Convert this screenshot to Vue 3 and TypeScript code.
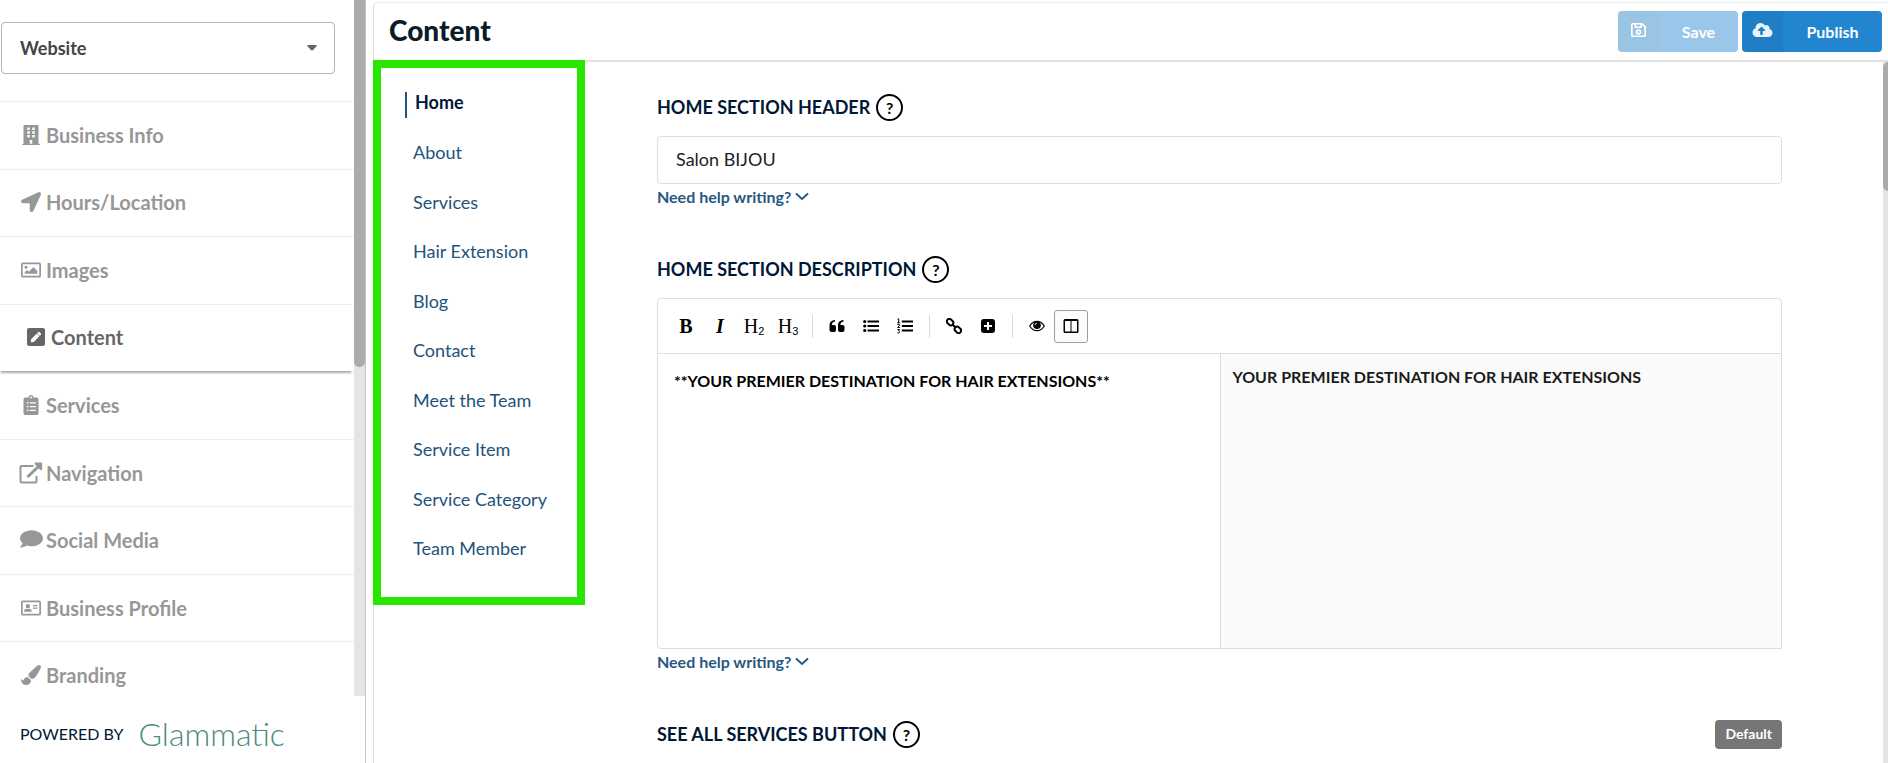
<script setup lang="ts">
import { ref } from 'vue'

interface MenuItem {
  label: string
  icon: string
}

const menu: MenuItem[] = [
  { label: 'Business Info', icon: 'building' },
  { label: 'Hours/Location', icon: 'arrow' },
  { label: 'Images', icon: 'image' },
  { label: 'Content', icon: 'pen' },
  { label: 'Services', icon: 'clipboard' },
  { label: 'Navigation', icon: 'external' },
  { label: 'Social Media', icon: 'comment' },
  { label: 'Business Profile', icon: 'card' },
  { label: 'Branding', icon: 'brush' },
]

const sections: string[] = [
  'Home',
  'About',
  'Services',
  'Hair Extension',
  'Blog',
  'Contact',
  'Meet the Team',
  'Service Item',
  'Service Category',
  'Team Member',
]

const area = ref('Website')
const activeMenu = ref('Content')
const activeSection = ref('Home')
const header = ref('Salon BIJOU')
const description = ref('**YOUR PREMIER DESTINATION FOR HAIR EXTENSIONS**')
</script>

<template>
  <div class="app">
    <aside class="sidebar">
      <div class="side-scroll">
        <div class="side-body">
          <div class="picker">
            <select v-model="area" aria-label="Area">
              <option>Website</option>
            </select>
            <svg class="caret" viewBox="0 0 10 6" aria-hidden="true"><path d="M1 0h8q1 .3.5 1.2L6 5q-1 1-2 0L.5 1.200Q0 .3 1 0z" /></svg>
          </div>
          <nav class="menu" aria-label="Main">
            <a
              v-for="item in menu"
              :key="item.label"
              href="#"
              class="menu-item"
              :class="{ active: item.label === activeMenu }"
              @click.prevent="activeMenu = item.label"
            >
              <span class="menu-icon">
                <svg v-if="item.icon === 'building'" class="i-building" viewBox="0 0 448 512"><path fill-rule="evenodd" d="M436 480h-20V24c0-13.300-10.700-24-24-24H56C42.700 0 32 10.700 32 24v456H12c-6.600 0-12 5.400-12 12v20h448v-20c0-6.600-5.400-12-12-12zM128 64h64v64h-64zM256 64h64v64h-64zM128 160h64v64h-64zM256 160h64v64h-64zM128 256h64v64h-64zM256 256h64v64h-64zM192 384h64v96h-64z" /></svg>
                <svg v-else-if="item.icon === 'arrow'" class="i-20" viewBox="0 0 512 512"><path d="M444.520 3.520L28.740 195.420c-47.970 22.390-31.980 92.750 19.190 92.750h175.910v175.910c0 51.170 70.360 67.170 92.750 19.190l191.900-415.780c15.990-38.390-25.590-79.970-63.970-63.970z" /></svg>
                <svg v-else-if="item.icon === 'image'" class="i-20" viewBox="0 0 512 512"><path fill-rule="evenodd" d="M48 64h416q48 0 48 48v288q0 48-48 48H48q-48 0-48-48V112q0-48 48-48zM54 106q-10 0-10 10v280q0 10 10 10h404q10 0 10-10V116q0-10-10-10zM128 144a40 40 0 1 1 0 80 40 40 0 1 1 0-80zM96 352v-40l48-48q10-8 20 0l36 36 110-110q10-8 20 0l86 90v72z" /></svg>
                <svg v-else-if="item.icon === 'pen'" class="i-pen" viewBox="0 0 448 448"><path d="M400 448H48c-26.500 0-48-21.500-48-48V48C0 21.500 21.500 0 48 0h352c26.500 0 48 21.500 48 48v352c0 26.500-21.500 48-48 48zM238.100 145.900L102.400 281.600l-6.300 57.100c-.8 7.600 5.600 14.100 13.300 13.300l57.100-6.300L302.200 210c2.300-2.300 2.300-6.100 0-8.500L246.700 146c-2.500-2.400-6.300-2.400-8.600-.1zM345 133.100L314.900 103c-9.400-9.400-24.600-9.400-33.900 0l-23.100 23.100c-2.300 2.300-2.300 6.100 0 8.500l55.500 55.500c2.300 2.300 6.100 2.300 8.500 0L345 167c9.300-9.300 9.300-24.500 0-33.900z" /></svg>
                <svg v-else-if="item.icon === 'clipboard'" class="i-clip" viewBox="0 0 384 512"><path fill-rule="evenodd" d="M336 64h-80c0-35.300-28.700-64-64-64s-64 28.700-64 64H48C21.500 64 0 85.500 0 112v352c0 26.500 21.500 48 48 48h288c26.500 0 48-21.500 48-48V112c0-26.500-21.500-48-48-48zM192 40a24 24 0 1 1 0 48 24 24 0 1 1 0-48zM104 176a24 24 0 1 1 0 48 24 24 0 1 1 0-48zM104 272a24 24 0 1 1 0 48 24 24 0 1 1 0-48zM104 368a24 24 0 1 1 0 48 24 24 0 1 1 0-48zM160 184h160v32H160zM160 280h160v32H160zM160 376h160v32H160z" /></svg>
                <svg v-else-if="item.icon === 'external'" class="i-ext" viewBox="0 0 24 22"><path fill="none" stroke="currentColor" stroke-width="2" d="M14.500 4H2.500Q1.500 4 1.500 5v14.500q0 1 1 1h14q1 0 1-1V14" /><path fill="none" stroke="currentColor" stroke-width="3" d="M8.500 15L20 4" /><path d="M16 .5h6.500q.7 0 .7.700V7.700l-1.500.5L15.500 2z" /></svg>
                <svg v-else-if="item.icon === 'comment'" class="i-comment" viewBox="0 32 512 448"><path d="M256 32C114.600 32 0 125.100 0 240c0 49.600 21.400 95 57 130.700C44.500 421.100 2.700 466 2.200 466.500c-2.200 2.300-2.800 5.700-1.500 8.700S4.800 480 8 480c66.300 0 116-31.800 140.600-51.400 32.700 12.300 69 19.400 107.400 19.400 141.400 0 256-93.100 256-208S397.400 32 256 32z" transform="translate(0 8) scale(1 .87)" /></svg>
                <svg v-else-if="item.icon === 'card'" class="i-20" viewBox="0 0 512 512"><path fill-rule="evenodd" d="M48 64h416q48 0 48 48v288q0 48-48 48H48q-48 0-48-48V112q0-48 48-48zM54 106q-10 0-10 10v280q0 10 10 10h404q10 0 10-10V116q0-10-10-10zM176 152a56 56 0 1 1 0 112 56 56 0 1 1 0-112zM80 352v-22q0-44 48-54 48 16 96 0 48 10 48 54v22zM304 176h120v32H304zM304 240h120v32H304z" /></svg>
                <svg v-else class="i-20" viewBox="0 0 512 512"><path d="M167.020 309.340c-40.120 2.580-76.530 17.860-97.190 72.300-2.350 6.210-8 9.980-14.590 9.980-11.110 0-45.460-27.670-55.250-34.350C0 439.620 37.930 512 128 512c75.860 0 128-43.770 128-120.190 0-3.110-.65-6.080-.97-9.130l-88.010-73.340zM457.890 0c-15.160 0-29.370 6.710-40.210 16.450C213.270 199.050 192 203.340 192 257.090c0 13.700 3.250 26.760 8.730 38.700l63.820 53.180c7.210 1.800 14.640 3.030 22.390 3.030 62.110 0 98.110-45.470 211.160-256.460 7.380-14.350 13.900-29.850 13.900-45.990C512 20.640 486 0 457.890 0z" /></svg>
              </span>
              <span>{{ item.label }}</span>
            </a>
          </nav>
        </div>
        <div class="side-track"><div class="side-thumb"></div></div>
      </div>
      <footer class="powered">
        <span>POWERED BY</span>
        <span class="brand">Glammatic</span>
      </footer>
    </aside>

    <main class="panel">
      <header class="topbar">
        <h1>Content</h1>
        <div class="actions">
          <button type="button" class="btn save" disabled>
            <span class="btn-icon">
              <svg viewBox="0 0 15 14" class="i-save"><path fill-rule="evenodd" d="M1.500 0h9.800L15 3.500v9q0 1.500-1.500 1.500h-12Q0 14 0 12.500v-11Q0 0 1.500 0zM1.700 1.600v10.800h11.600V4.300L11 1.800V5H3.500V1.600zM5.200 1.600v1.900h4V1.600zM7.500 6.200a2.800 2.800 0 1 1 0 5.600 2.800 2.800 0 1 1 0-5.600zM7.500 7.900a1.100 1.100 0 1 0 0 2.200 1.100 1.100 0 1 0 0-2.200z" /></svg>
            </span>
            <span class="btn-text">Save</span>
          </button>
          <button type="button" class="btn publish">
            <span class="btn-icon">
              <svg viewBox="0 32 640 448" class="i-cloud"><path d="M537.600 226.600c4.100-10.700 6.400-22.400 6.400-34.600 0-53-43-96-96-96-19.700 0-38.100 6-53.300 16.200C367 64.200 315.300 32 256 32c-88.400 0-160 71.600-160 160 0 2.700.1 5.400.2 8.100C40.200 219.800 0 273.200 0 336c0 79.500 64.500 144 144 144h368c70.700 0 128-57.300 128-128 0-61.900-44-113.600-102.400-125.400zM393.400 288H328v112c0 8.800-7.200 16-16 16h-48c-8.800 0-16-7.200-16-16V288h-65.400c-14.300 0-21.400-17.200-11.300-27.300l105.400-105.400c6.200-6.200 16.400-6.200 22.600 0l105.400 105.400c10.100 10.100 2.900 27.300-11.300 27.300z" /></svg>
            </span>
            <span class="btn-text">Publish</span>
          </button>
        </div>
      </header>

      <div class="workspace">
        <nav class="sections" aria-label="Sections">
          <a
            v-for="name in sections"
            :key="name"
            href="#"
            :class="{ current: name === activeSection }"
            @click.prevent="activeSection = name"
          ><span>{{ name }}</span></a>
        </nav>

        <form class="form" @submit.prevent>
          <section class="group">
            <div class="label-row">
              <label for="home-header">HOME SECTION HEADER</label>
              <button type="button" class="help" aria-label="About this field">?</button>
            </div>
            <input id="home-header" v-model="header" class="field" type="text" />
            <a href="#" class="tip" @click.prevent>Need help writing?
              <svg viewBox="0 0 14 9" class="chev"><path d="M1 1.500l6 5.500 6-5.500" /></svg>
            </a>
          </section>

          <section class="group">
            <div class="label-row">
              <label for="home-desc">HOME SECTION DESCRIPTION</label>
              <button type="button" class="help" aria-label="About this field">?</button>
            </div>
            <div class="editor">
              <div class="toolbar">
                <button type="button" class="tool serif bold">B</button>
                <button type="button" class="tool serif italic">I</button>
                <button type="button" class="tool serif">H<sub>2</sub></button>
                <button type="button" class="tool serif">H<sub>3</sub></button>
                <i class="sep"></i>
                <button type="button" class="tool" aria-label="Quote">
                  <svg viewBox="0 0 16 14"><path d="M6 1v1.500Q3 3 3 5.500V6h2q2 0 2 2v3q0 2-2 2H2.500q-2 0-2-2V6q0-4.500 5.500-5zM14.500 1v1.500q-3 .5-3 3V6h2q2 0 2 2v3q0 2-2 2H11q-2 0-2-2V6q0-4.500 5.500-5z" /></svg>
                </button>
                <button type="button" class="tool" aria-label="Bulleted list">
                  <svg viewBox="0 0 16 14"><circle cx="1.700" cy="2.500" r="1.600" /><circle cx="1.700" cy="7" r="1.600" /><circle cx="1.700" cy="11.500" r="1.600" /><path d="M4.500 1.500H16v2H4.500zM4.500 6H16v2H4.500zM4.500 10.500H16v2H4.500z" /></svg>
                </button>
                <button type="button" class="tool" aria-label="Numbered list">
                  <svg viewBox="0 0 16 16"><path d="M4.800 2.500H16v2H4.800zM4.800 7H16v2H4.800zM4.800 11.500H16v2H4.800z" /><path fill="none" stroke="currentColor" d="M.5 1.300l1.200-.5v4M.3 4.800h2.600M.4 6.500q2-.8 2.300.4 0 .8-2.100 2.600h2.300M.4 11.500h2.200l-1 1.400q1.200.2 1 1.400-.6 1.200-2.300.5" /></svg>
                </button>
                <i class="sep"></i>
                <button type="button" class="tool" aria-label="Link">
                  <svg viewBox="0 0 16 16"><g fill="none" stroke="currentColor" stroke-width="2" transform="rotate(45 8 8)"><rect x="-1" y="5.500" width="7" height="5" rx="2.500" /><rect x="10" y="5.500" width="7" height="5" rx="2.500" /><path d="M5.500 8h5" /></g></svg>
                </button>
                <button type="button" class="tool" aria-label="Insert">
                  <svg viewBox="0 0 16 16"><path fill-rule="evenodd" d="M4 1h8q3 0 3 3v8q0 3-3 3H4q-3 0-3-3V4q0-3 3-3zM7 4v3H4v2h3v3h2V9h3V7H9V4z" /></svg>
                </button>
                <i class="sep"></i>
                <button type="button" class="tool" aria-label="Preview">
                  <svg viewBox="0 0 16 12"><path fill="none" stroke="currentColor" stroke-width="1.200" d="M.7 6Q3.500 1.300 8 1.300T15.300 6Q12.500 10.700 8 10.700T.7 6z" /><circle cx="8" cy="5.200" r="3.800" /><path fill="none" stroke="#fff" stroke-width=".8" d="M6 5.200q0-2 2-2" /></svg>
                </button>
                <button type="button" class="tool pressed" aria-label="Side by side" aria-pressed="true">
                  <svg viewBox="0 0 16 16"><path fill-rule="evenodd" d="M2 1h12q1.500 0 1.500 1.500v11Q15.500 15 14 15H2Q.5 15 .5 13.500v-11Q.5 1 2 1zM2 3v10.500h5.500V3zM8.500 3v10.500H14V3z" /></svg>
                </button>
              </div>
              <div class="panes">
                <textarea id="home-desc" v-model="description"></textarea>
                <div class="preview"><strong>YOUR PREMIER DESTINATION FOR HAIR EXTENSIONS</strong></div>
              </div>
            </div>
            <a href="#" class="tip" @click.prevent>Need help writing?
              <svg viewBox="0 0 14 9" class="chev"><path d="M1 1.500l6 5.500 6-5.500" /></svg>
            </a>
          </section>

          <section class="group">
            <div class="label-row">
              <span class="label">SEE ALL SERVICES BUTTON</span>
              <button type="button" class="help" aria-label="About this field">?</button>
              <button type="button" class="badge">Default</button>
            </div>
          </section>
        </form>
        <div class="main-track"><div class="main-thumb"></div></div>
      </div>
    </main>
  </div>
</template>

<style>
body {
  margin: 0;
  background: #fff;
}
</style>

<style scoped>
* {
  box-sizing: border-box;
}
.app {
  display: flex;
  height: 100vh;
  overflow: hidden;
  font-family: Lato, "Liberation Sans", sans-serif;
  font-size: 18px;
  color: #001737;
}
svg {
  display: block;
  fill: currentColor;
}
a {
  text-decoration: none;
  color: inherit;
}
button {
  font-family: inherit;
  padding: 0;
}

.sidebar {
  display: flex;
  flex-direction: column;
  flex: 0 0 366px;
  border-right: 1px solid #c4c4c4;
}
.side-scroll {
  display: flex;
  flex: 1;
  min-height: 0;
}
.side-body {
  flex: 1;
  overflow: hidden;
}
.side-track {
  flex: 0 0 11px;
  background: #e5e5e5;
}
.side-thumb {
  height: 367px;
  background: #ababab;
  border-radius: 0 0 5px 5px;
}
.picker {
  position: relative;
  margin: 22px 19px 27px 1px;
}
.picker select {
  display: block;
  width: 100%;
  height: 52px;
  padding: 0 18px;
  border: 1px solid #b3b3b3;
  border-radius: 4px;
  background: #fff;
  appearance: none;
  font: 700 18px Lato, sans-serif;
  color: #444;
}
.caret {
  position: absolute;
  right: 18px;
  top: 23px;
  width: 10px;
  height: 6px;
  color: #666;
}
.menu {
  display: grid;
  grid-template-rows: repeat(9, 1fr);
  height: 608px;
}
.menu-item {
  display: flex;
  align-items: center;
  gap: 3px;
  padding: 0 0 1px 19px;
  border-top: 1px solid #eee;
  font-size: 20px;
  font-weight: 700;
  color: #979797;
}
.menu-item.active {
  z-index: 1;
  margin-right: 2px;
  padding-left: 24px;
  color: #666;
  box-shadow: 0 3px 2px -1px #aaa;
  background: #fff;
}
.menu-icon {
  display: flex;
  justify-content: center;
  flex: 0 0 24px;
}
.i-building {
  width: 18px;
  height: 20px;
}
.i-20 {
  width: 20px;
  height: 20px;
}
.i-pen {
  width: 18px;
  height: 18px;
}
.i-clip {
  width: 16px;
  height: 20px;
}
.i-ext {
  width: 24px;
  height: 22px;
}
.i-comment {
  width: 23px;
  height: 20px;
}
.powered {
  display: flex;
  align-items: center;
  gap: 15px;
  height: 67px;
  padding: 8px 0 0 20px;
  font-size: 16px;
}
.brand {
  font-size: 32px;
  font-weight: 300;
  line-height: 40px;
  color: #4d897f;
}

.panel {
  display: flex;
  flex: 1;
  flex-direction: column;
  min-width: 0;
  margin: 2px 0 0 7px;
  border-top: 1px solid #eee;
  border-left: 1px solid #ddd;
  border-top-left-radius: 5px;
}
.topbar {
  display: flex;
  align-items: center;
  justify-content: space-between;
  height: 59px;
  padding: 0 6px 0 15px;
  border-bottom: 2px solid #e2e2e2;
}
h1 {
  margin: 0;
  padding-bottom: 4px;
  font-size: 28px;
  font-weight: 900;
  line-height: 34px;
  color: #0b1c28;
}
.actions {
  display: flex;
  gap: 4px;
}
.btn {
  display: flex;
  height: 41px;
  overflow: hidden;
  border: 0;
  border-radius: 4px;
  background: #2185d0;
  font-size: 16px;
  font-weight: 700;
  color: #fff;
}
.save {
  width: 120px;
  opacity: 0.45;
}
.publish {
  width: 140px;
}
.btn-icon {
  display: flex;
  justify-content: center;
  align-self: stretch;
  flex: 0 0 41px;
  padding-top: 12px;
  background: rgba(0, 0, 0, 0.05);
}
.btn-text {
  flex: 1;
  align-self: center;
  text-align: center;
}
.i-save {
  width: 15px;
  height: 14px;
}
.i-cloud {
  width: 21px;
  height: 14px;
  opacity: 0.9;
}

.workspace {
  display: flex;
  flex: 1;
  align-items: flex-start;
  min-height: 0;
}
.sections {
  position: relative;
  display: grid;
  grid-template-rows: repeat(10, 1fr);
  flex: 0 0 212px;
  height: 545px;
  margin: -2px 0 0 -1px;
  padding: 10px 0 24px 24px;
  border: 8px solid #28e600;
  color: #23527c;
}
.sections a {
  display: flex;
  align-items: center;
  padding-left: 8px;
}
.sections .current {
  padding: 4px 0 0;
  font-weight: 700;
  color: #001737;
}
.current span {
  height: 26px;
  padding-left: 8px;
  border-left: 2px solid #23527c;
  line-height: 20px;
}
.form {
  flex: 1;
  min-width: 0;
  margin: 32px 101px 0 72px;
}
.group {
  margin-bottom: 46px;
}
.label-row {
  display: flex;
  align-items: center;
  height: 27px;
  margin-bottom: 15px;
  font-weight: 700;
}
.label-row label,
.label {
  padding-bottom: 2px;
}
.help {
  width: 27px;
  height: 27px;
  margin-left: 6px;
  border: 2px solid #000;
  border-radius: 50%;
  background: #fff;
  font-size: 16px;
  font-weight: 700;
  color: #000;
}
.badge {
  height: 29px;
  margin-left: auto;
  padding: 0 10px 2px;
  border: 0;
  border-radius: 4px;
  background: #767676;
  font-size: 14px;
  font-weight: 700;
  color: #fff;
}
.field {
  display: block;
  width: 100%;
  height: 48px;
  padding: 0 18px 2px;
  border: 1px solid #dedede;
  border-radius: 4px;
  font: 18px Lato, sans-serif;
  color: #222;
}
.tip {
  display: flex;
  align-items: center;
  gap: 4px;
  height: 26px;
  padding-bottom: 2px;
  font-size: 16px;
  font-weight: 700;
  color: #28587f;
}
.chev {
  width: 14px;
  height: 9px;
  fill: none;
  stroke: currentColor;
  stroke-width: 2;
}
.editor {
  border: 1px solid #dedede;
  border-radius: 4px 4px 0 4px;
}
.toolbar {
  display: flex;
  align-items: center;
  height: 55px;
  padding: 0 11px;
  border-bottom: 1px solid #dedede;
}
.tool {
  display: flex;
  align-items: center;
  justify-content: center;
  width: 34px;
  height: 33px;
  border: 1px solid transparent;
  border-radius: 3px;
  background: none;
  font-size: 20px;
  color: #000;
}
.tool svg {
  width: 16px;
  height: 16px;
}
.serif {
  font-family: "Liberation Serif", serif;
}
.bold {
  font-weight: 700;
}
.italic {
  font-weight: 700;
  font-style: italic;
}
.tool sub {
  align-self: flex-end;
  font: 11px "Liberation Sans", sans-serif;
  padding-bottom: 5px;
}
.pressed {
  border-color: #95a5a6;
  background: #fcfcfc;
}
.sep {
  width: 1px;
  height: 23px;
  margin: 0 7px;
  background: #d9d9d9;
}
.panes {
  display: grid;
  grid-template-columns: 1fr 1fr;
  height: 294px;
}
textarea {
  display: block;
  padding: 16px;
  border: 0;
  resize: none;
  background: none;
  font: 700 16px/22px Lato, sans-serif;
  color: #000;
}
.preview {
  padding: 12px;
  border-left: 1px solid #dedede;
  background: #fafafa;
  font-size: 16px;
  line-height: 22px;
  color: #1b1b1b;
}
.main-track {
  flex: 0 0 5px;
  align-self: stretch;
  background: #e5e5e5;
}
.main-thumb {
  height: 129px;
  border-radius: 5px 0 0 5px;
  background: #ababab;
}
</style>
